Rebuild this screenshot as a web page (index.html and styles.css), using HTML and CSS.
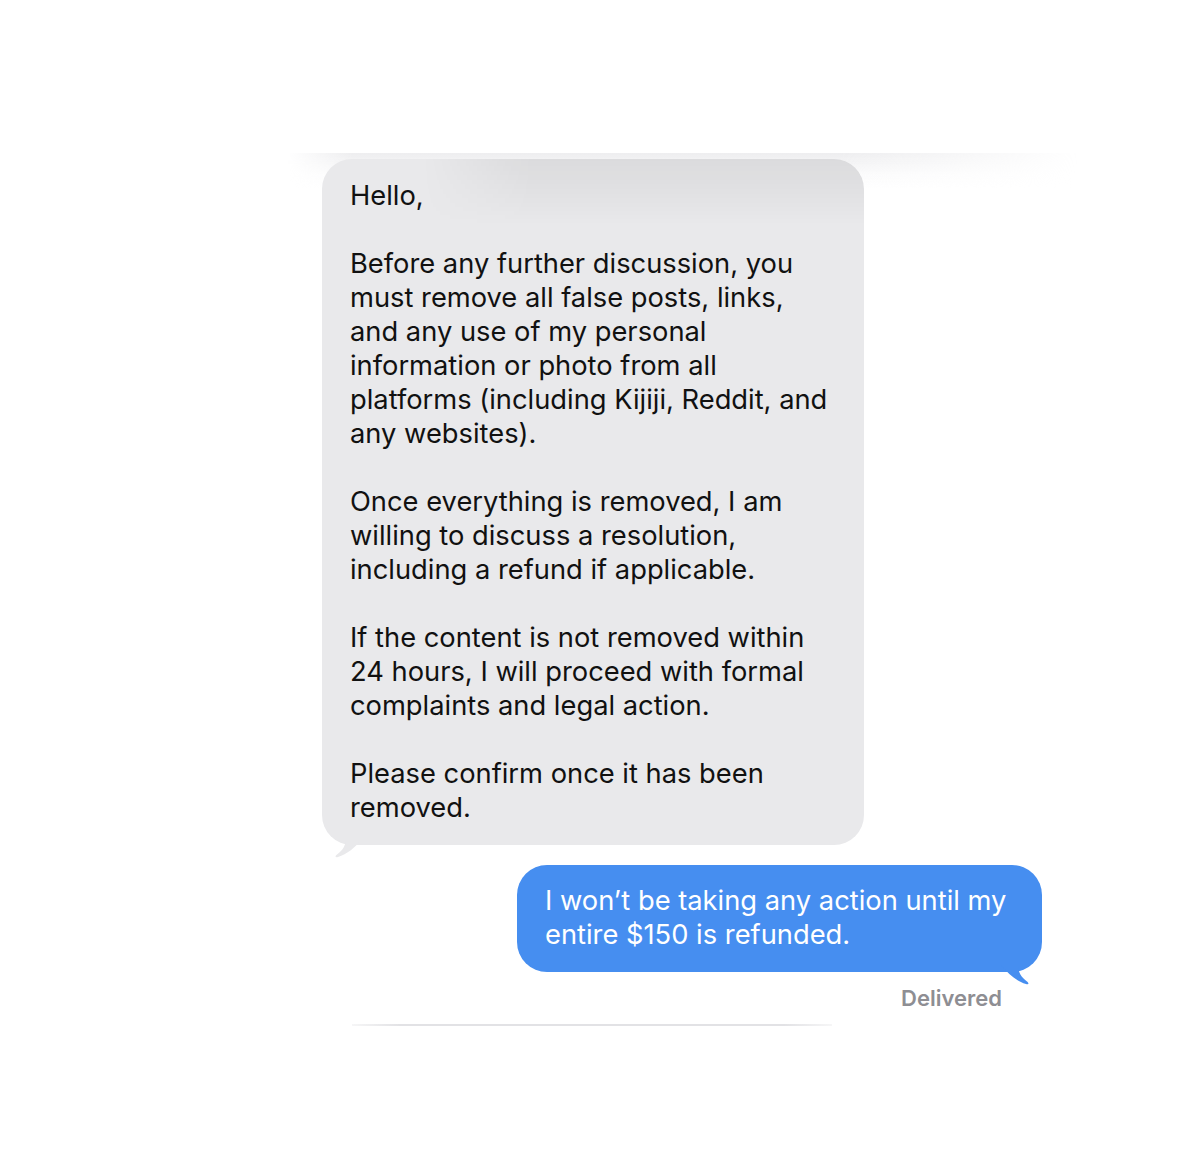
FILE: index.html
```html
<!DOCTYPE html>
<html lang="en">
<head>
    <meta charset="UTF-8">
    <meta name="viewport" content="width=device-width, initial-scale=1.0">
    <title>Messages</title>
    <link rel="stylesheet" href="styles.css">
</head>
<body>
    <div class="screen">
        <!-- soft shadow band left over from the screenshot -->
        <div class="top-shade"></div>

        <div class="thread">
            <div class="bubble received">
                <div class="bubble-shade"></div>
                <p>Hello,</p>
                <p>Before any further discussion, you must remove all false posts, links, and any use of my personal information or photo from all platforms (including Kijiji, Reddit, and any websites).</p>
                <p>Once everything is removed, I am willing to discuss a resolution, including a refund if applicable.</p>
                <p>If the content is not removed within 24 hours, I will proceed with formal complaints and legal action.</p>
                <p>Please confirm once it has been removed.</p>
                <svg class="tail tail-left" width="30" height="22" viewBox="0 0 30 22">
                    <path d="M12 0 C12 7 9 12 3 16.5 C0.5 18.5 1.5 20 4 19 C13 16 21 10 29 0 Z" fill="#e9e9eb"/>
                </svg>
            </div>

            <div class="bubble sent">
                <p>I won’t be taking any action until my entire $150 is refunded.</p>
                <svg class="tail tail-right" width="30" height="22" viewBox="0 0 30 22">
                    <path d="M18 0 C18 7 21 12 27 16.5 C29.5 18.5 28.5 20 26 19 C17 16 9 10 1 0 Z" fill="#468ef0"/>
                </svg>
            </div>

            <div class="status">Delivered</div>
        </div>

        <div class="divider"></div>
    </div>
</body>
</html>
```

FILE: styles.css
```css
body {
    margin: 0;
    padding: 0;
    background-color: #fff;
    font-family: Inter, "Noto Sans", sans-serif;
}

.screen {
    position: relative;
    width: 1194px;
    height: 1168px;
    padding-top: 159px;
    box-sizing: border-box;
}

.top-shade {
    position: absolute;
    left: 288px;
    top: 153px;
    width: 790px;
    height: 36px;
    background: linear-gradient(to bottom, rgba(236, 236, 238, 0.9), rgba(248, 248, 249, 0.6) 60%, rgba(255, 255, 255, 0));
    -webkit-mask-image: linear-gradient(to right, transparent 0%, #000 8%, #000 70%, transparent 100%);
    mask-image: linear-gradient(to right, transparent 0%, #000 8%, #000 70%, transparent 100%);
}

.thread {
    position: relative;
    width: 720px;
    margin-left: 322px;
    display: flex;
    flex-direction: column;
}

.bubble {
    position: relative;
    border-radius: 30px;
    font-size: 27.3px;
    line-height: 34px;
}

.bubble p {
    position: relative;
    margin: 0 0 34px 0;
}

.bubble p:last-of-type {
    margin-bottom: 0;
}

.received {
    align-self: flex-start;
    width: 542px;
    box-sizing: border-box;
    padding: 20px 28px 20px 28px;
    background-color: #e9e9eb;
    color: #111;
}

.bubble-shade {
    position: absolute;
    top: 0;
    left: 100px;
    right: 0;
    height: 66px;
    border-top-right-radius: 30px;
    background: linear-gradient(to bottom, rgba(0, 0, 0, 0.06), rgba(0, 0, 0, 0.02) 70%, rgba(0, 0, 0, 0));
    -webkit-mask-image: linear-gradient(to right, transparent 0%, #000 25%);
    mask-image: linear-gradient(to right, transparent 0%, #000 25%);
}

.sent {
    align-self: flex-end;
    width: 525px;
    box-sizing: border-box;
    margin-top: 20px;
    padding: 19px 28px 20px 28px;
    background-color: #468ef0;
    color: #fff;
}

.tail {
    position: absolute;
    bottom: -15px;
}

.tail-left {
    left: 12px;
}

.tail-right {
    right: 12px;
}

.status {
    margin-top: 13px;
    padding-right: 40px;
    text-align: right;
    font-size: 22px;
    font-weight: 600;
    color: #8e8e93;
}

.divider {
    width: 480px;
    height: 2px;
    margin: 13px 0 0 352px;
    background: linear-gradient(to right, rgba(225, 225, 228, 0.3), #e2e2e5 10%, #e2e2e5 90%, rgba(225, 225, 228, 0.3));
}
```
